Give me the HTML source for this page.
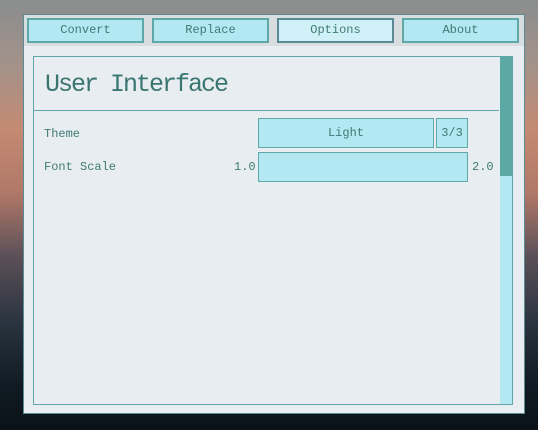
<!DOCTYPE html>
<html><head><style>
*{margin:0;padding:0;box-sizing:border-box}
body{width:538px;height:430px;overflow:hidden;position:relative;font-family:"Liberation Mono",monospace;
background:linear-gradient(180deg,#8a8d8e 0%,#a3928a 15%,#c48a72 30%,#b07868 45%,#5a4f58 60%,#2a3440 75%,#101a22 90%,#0a1218 100%)}
.win{position:absolute;left:23px;top:14px;width:502px;height:400px;background:#e8edf1;border:1px solid #5a8a92}
.bar{position:absolute;left:0;top:0;width:500px;height:31px;background:#d8dde0}
.btn{position:absolute;top:3px;width:117px;height:25px;border:2px solid #5fa8a8;background:#b3e8f2;color:#3f7a75;font-size:12px;text-align:center;line-height:21px}
.panel{position:absolute;left:9px;top:41px;width:480px;height:349px;border:1px solid #5fa8a8}
.sb{position:absolute;right:0;top:0;width:12px;height:347px;background:#b3e8f2}
.th{position:absolute;left:0;top:0;width:12px;height:119px;background:#5ba8a5}
.t{position:absolute;color:#3f7a75}
.box{position:absolute;border:1px solid #5fa8a8;background:#b3e8f2;color:#3f7a75;font-size:12px;text-align:center}
</style></head><body>
<div class="win">
<div class="bar">
<div class="btn" style="left:3px">Convert</div>
<div class="btn" style="left:128px">Replace</div>
<div class="btn" style="left:253px;background:#d0f0f8;border-color:#5a8a95">Options</div>
<div class="btn" style="left:378px">About</div>
</div>
<div class="panel">
<div class="t" style="left:11px;top:13px;font-size:25px;letter-spacing:-2px;color:#3a7670">User Interface</div>
<div style="position:absolute;left:0;top:53px;width:465px;height:1px;background:#5fa8a8"></div>
<div class="t" style="left:10px;top:70px;font-size:12px">Theme</div>
<div class="t" style="left:10px;top:103px;font-size:12px">Font Scale</div>
<div class="box" style="left:224px;top:61px;width:176px;height:30px;line-height:28px">Light</div>
<div class="box" style="left:402px;top:61px;width:32px;height:30px;line-height:28px">3/3</div>
<div class="t" style="left:200px;top:103px;font-size:12px">1.0</div>
<div class="box" style="left:224px;top:95px;width:210px;height:30px"></div>
<div class="t" style="left:438px;top:103px;font-size:12px">2.0</div>
<div class="sb"><div class="th"></div></div>
</div>
</div>
</body></html>
